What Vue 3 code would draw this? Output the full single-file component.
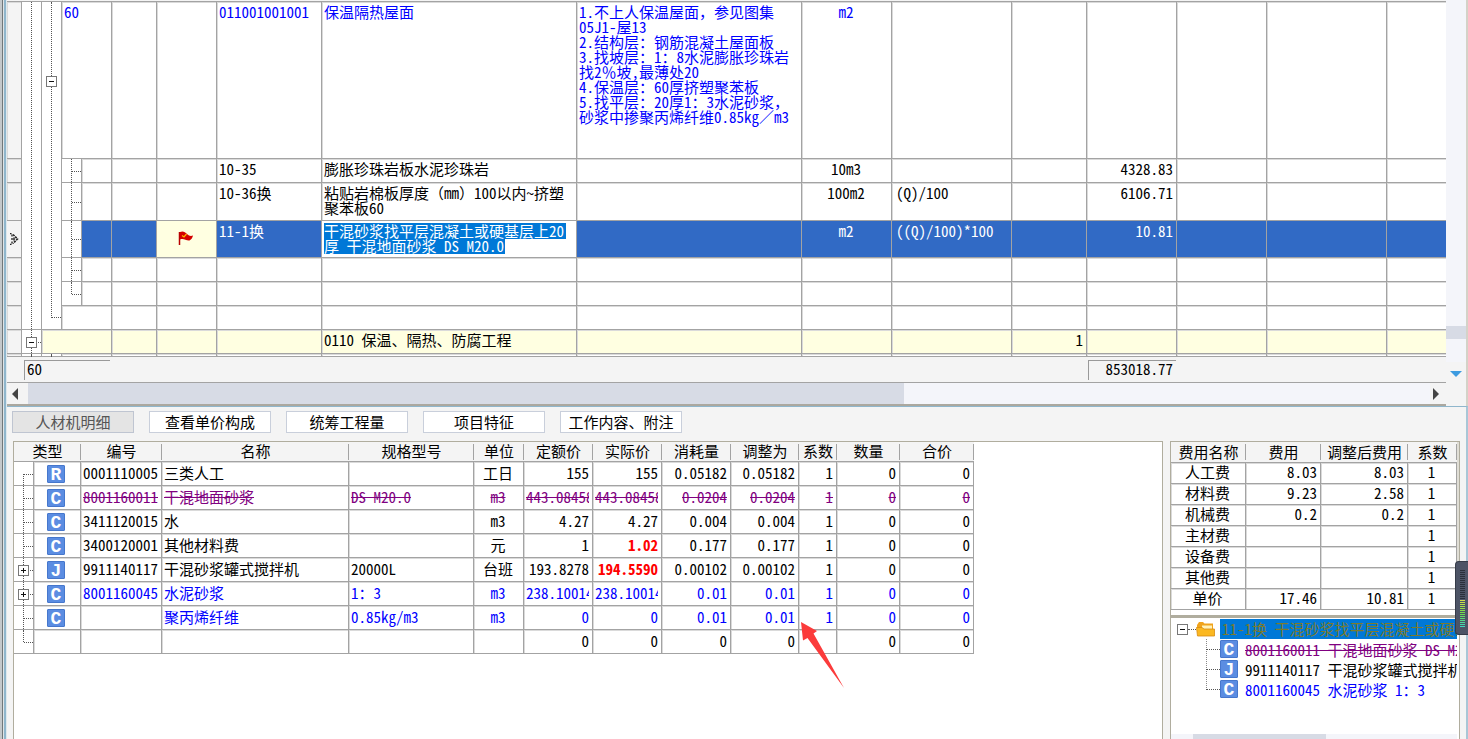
<script setup>
import { ref } from 'vue'

const editing = ref('干混砂浆找平层混凝土或硬基层上20厚 干混地面砂浆 DS M20.0')

const feature = [
  '1.不上人保温屋面，参见图集',
  '05J1-屋13',
  '2.结构层：钢筋混凝土屋面板',
  '3.找坡层：1：8水泥膨胀珍珠岩',
  '找2％坡,最薄处20',
  '4.保温层：60厚挤塑聚苯板',
  '5.找平层：20厚1：3水泥砂浆，',
  '砂浆中掺聚丙烯纤维0.85kg／m3',
].join('\n')

const gridWidths = [15, 20, 20, 20, 30, 45, 60, 105, 255, 225, 90, 120, 75, 90, 90, 120]

const items = [
  { kind: 'head', no: '60', code: '011001001001', name: '保温隔热屋面', feature, unit: 'm2' },
  { kind: 'child', code: '10-35', name: '膨胀珍珠岩板水泥珍珠岩', unit: '10m3', price: '4328.83' },
  { kind: 'child', tall: true, code: '10-36换', name: '粘贴岩棉板厚度（mm）100以内~挤塑\n聚苯板60', unit: '100m2', expr: '(Q)/100', price: '6106.71' },
  { kind: 'child', tall: true, selected: true, code: '11-1换', unit: 'm2', expr: '((Q)/100)*100', price: '10.81' },
  { kind: 'child' },
  { kind: 'child', last: true },
  { kind: 'tail' },
  { kind: 'section', name: '0110 保温、隔热、防腐工程', qty: '1' },
  { kind: 'sliver' },
]

const tabs = ['人材机明细', '查看单价构成', '统筹工程量', '项目特征', '工作内容、附注']

const detailWidths = [20, 47, 81, 187, 125, 50, 69, 69, 69, 68, 38, 63, 74]
const detailHeads = ['编号', '名称', '规格型号', '单位', '定额价', '实际价', '消耗量', '调整为', '系数', '数量', '合价']
const details = [
  { type: 'R', v: ['0001110005', '三类人工', '', '工日', '155', '155', '0.05182', '0.05182', '1', '0', '0'] },
  { type: 'C', tone: 'removed', v: ['8001160011', '干混地面砂浆', 'DS M20.0', 'm3', '443.08458', '443.08458', '0.0204', '0.0204', '1', '0', '0'] },
  { type: 'C', v: ['3411120015', '水', '', 'm3', '4.27', '4.27', '0.004', '0.004', '1', '0', '0'] },
  { type: 'C', hot: true, v: ['3400120001', '其他材料费', '', '元', '1', '1.02', '0.177', '0.177', '1', '0', '0'] },
  { type: 'J', hot: true, open: true, v: ['9911140117', '干混砂浆罐式搅拌机', '20000L', '台班', '193.8278', '194.5590', '0.00102', '0.00102', '1', '0', '0'] },
  { type: 'C', tone: 'added', open: true, v: ['8001160045', '水泥砂浆', '1：3', 'm3', '238.10014', '238.10014', '0.01', '0.01', '1', '0', '0'] },
  { type: 'C', tone: 'added', v: ['', '聚丙烯纤维', '0.85kg/m3', 'm3', '0', '0', '0.01', '0.01', '1', '0', '0'] },
  { type: '', v: ['', '', '', '', '0', '0', '0', '0', '', '0', '0'] },
]
const align = (i) => (i < 3 ? 'l' : i === 3 ? 'c' : 'r')

const fees = [
  ['人工费', '8.03', '8.03', '1'],
  ['材料费', '9.23', '2.58', '1'],
  ['机械费', '0.2', '0.2', '1'],
  ['主材费', '', '', '1'],
  ['设备费', '', '', '1'],
  ['其他费', '', '', '1'],
  ['单价', '17.46', '10.81', '1'],
]

const nodes = [
  { type: 'C', tone: 'removed', text: '8001160011 干混地面砂浆 DS M20.0' },
  { type: 'J', text: '9911140117 干混砂浆罐式搅拌机' },
  { type: 'C', tone: 'added', text: '8001160045 水泥砂浆 1：3' },
]
</script>

<template>
  <div class="app">
    <section class="upper">
      <div class="upper-main">
        <table class="grid">
          <colgroup>
            <col v-for="(w, i) in gridWidths" :key="i" :style="{ width: w + 'px' }" />
            <col />
          </colgroup>
          <tbody>
            <tr v-for="(r, i) in items" :key="i" :class="[r.kind, { tall: r.tall, selected: r.selected }]">
              <td class="gutter">
                <svg v-if="r.selected" class="cursor" width="9" height="12" viewBox="0 0 9 12">
                  <path d="M0 .7h1.500M0 11.300h1.500M2 1.500v2M2 8.500v2M2 5v2" fill="none" stroke="#222" stroke-width="1.300" />
                  <path d="M3 1.500L7.500 6 3 10.500" fill="none" stroke="#222" stroke-width="1.600" stroke-dasharray="2.200 0.800" />
                  <path d="M4 4.500v3" stroke="#222" stroke-width="1.500" />
                </svg>
              </td>
              <td v-if="r.kind === 'head'" class="tree" rowspan="7"><i class="v"></i></td>
              <td v-if="r.kind === 'section'" class="tree">
                <i class="v"></i><i class="h"></i><button class="box minus" aria-label="折叠"></button>
              </td>
              <td v-if="r.kind === 'sliver'" class="tree"><i class="v"></i></td>
              <td v-if="r.kind === 'head'" class="tree long" rowspan="7">
                <i class="v"></i><i class="h"></i><button class="box minus" aria-label="折叠"></button>
              </td>
              <td v-if="r.kind === 'sliver'" class="tree"><i class="v"></i></td>
              <td v-if="r.kind === 'child'" class="tree" :class="{ last: r.last }"><i class="v"></i><i class="h"></i></td>
              <td v-if="r.kind === 'section'" colspan="3"></td>
              <td v-else-if="r.kind === 'child'"></td>
              <td v-else colspan="2">{{ r.no }}</td>
              <td></td>
              <td class="flag-cell">
                <svg v-if="r.selected" class="flag" width="16" height="15" viewBox="0 0 16 15">
                  <path d="M1.500 1v13" stroke="#b80000" stroke-width="1.500" />
                  <path d="M2 1c3-1.500 5 0 7 2s4 2.500 6 1.500c-.5 2-1.500 4-3.500 5C8 10 6 7 2 8.500z" fill="#d40000" />
                  <path d="M4 4.500l2 1.500 2.500-3" fill="none" stroke="#ffb400" stroke-width="1.200" />
                </svg>
              </td>
              <td>{{ r.code }}</td>
              <td v-if="r.selected" class="edit-cell">
                <textarea v-model="editing" aria-label="名称" spellcheck="false"></textarea>
              </td>
              <td v-else>{{ r.name }}</td>
              <td>{{ r.feature }}</td>
              <td class="c">{{ r.unit }}</td>
              <td class="expr">{{ r.expr }}</td>
              <td class="r">{{ r.qty }}</td>
              <td class="r">{{ r.price }}</td>
              <td></td>
              <td></td>
              <td></td>
            </tr>
          </tbody>
        </table>
        <div class="totals">
          <output class="sunk first">60</output>
          <output class="sunk sum">853018.77</output>
        </div>
        <div class="hscroll">
          <svg width="21" height="20" viewBox="0 0 21 20"><path d="M11 4v12L5 10z" fill="#444" /></svg>
          <div class="htrack"><div class="hthumb"></div></div>
          <svg width="16" height="20" viewBox="0 0 16 20"><path d="M3 4v12l6-6z" fill="#444" /></svg>
        </div>
      </div>
      <div class="vscroll">
        <div class="vthumb"></div>
        <svg width="20" height="24" viewBox="0 0 20 24"><path d="M4 9h12l-6 6z" fill="#3d9be0" /></svg>
      </div>
    </section>

    <section class="lower">
      <nav class="tabs">
        <button v-for="(t, i) in tabs" :key="t" :class="{ active: i === 0 }">{{ t }}</button>
      </nav>
      <div class="panels">
        <div class="panel detail-panel">
          <table class="detail">
            <colgroup><col v-for="(w, i) in detailWidths" :key="i" :style="{ width: w + 'px' }" /></colgroup>
            <thead>
              <tr>
                <th colspan="2">类型</th>
                <th v-for="h in detailHeads" :key="h">{{ h }}</th>
              </tr>
            </thead>
            <tbody>
              <tr v-for="(d, i) in details" :key="i" :class="d.tone">
                <td class="tree" :class="{ first: i === 0, last: i === 7 }">
                  <i class="v"></i><i class="h"></i>
                  <button v-if="d.open" class="box plus" aria-label="展开"></button>
                </td>
                <td class="badge-cell"><span v-if="d.type" class="badge">{{ d.type }}</span></td>
                <td v-for="(v, k) in d.v" :key="k" class="value" :class="[align(k), { hot: d.hot && k === 5 }]"><div>{{ v }}</div></td>
              </tr>
            </tbody>
          </table>
          <svg class="arrow" width="44" height="68" viewBox="0 0 44 68">
            <path d="M0 0L16 9l-3.500 2.500L43 66 6.500 16 2 18.500z" fill="#fb3b3b" />
          </svg>
        </div>

        <aside class="side">
          <div class="panel fee-panel">
            <table class="fees">
              <thead>
                <tr><th class="f1">费用名称</th><th class="f2">费用</th><th class="f3">调整后费用</th><th>系数</th></tr>
              </thead>
              <tbody>
                <tr v-for="f in fees" :key="f[0]">
                  <td class="c">{{ f[0] }}</td><td class="r">{{ f[1] }}</td><td class="r">{{ f[2] }}</td><td class="c">{{ f[3] }}</td>
                </tr>
              </tbody>
            </table>
          </div>
          <div class="panel node-panel">
            <div class="root">
              <button class="box minus" aria-label="折叠"></button>
              <i class="dots"></i>
              <svg width="19" height="16" viewBox="0 0 19 16">
                <path d="M1 4L3 1h4l1.500 1.500H17V8H1z" fill="#f0a31c" />
                <path d="M6 4.500h10V9H6z" fill="#fff2b8" />
                <path d="M.5 6.500h5.500L8 8h10.500v7H1.500z" fill="#fbb821" stroke="#d88c10" stroke-width=".8" />
              </svg>
              <span class="root-text">11-1换 干混砂浆找平层混凝土或硬基层</span>
            </div>
            <ul class="nodes">
              <li v-for="n in nodes" :key="n.text" :class="n.tone">
                <i class="dots"></i><span class="badge">{{ n.type }}</span><span class="node-text">{{ n.text }}</span>
              </li>
            </ul>
            <div class="node-scroll"><div></div></div>
          </div>
        </aside>
      </div>
    </section>

    <div class="meter">
      <div class="meter-off"></div>
      <div class="meter-on"></div>
    </div>
  </div>
</template>

<style>
body {
  background: #f4f4f4;
}
</style>

<style scoped>
* {
  box-sizing: border-box;
}
.app {
  position: relative;
  height: 100vh;
  display: flex;
  flex-direction: column;
  overflow: hidden;
  padding-left: 7px;
  background: linear-gradient(90deg, #c3c8cb 2px, #70777a 2px 3px, #e0e4e6 3px 4px, #8fb6cc 4px 6px, #dde8ee 6px 7px, #f4f4f4 7px);
  font: 15px/15px 'Noto Sans Mono CJK SC', 'Liberation Mono', 'Noto Sans CJK SC', monospace;
  color: #000;
}
button {
  font: inherit;
  color: inherit;
  padding: 0;
}
table {
  border-collapse: separate;
  border-spacing: 0;
  table-layout: fixed;
}
td {
  position: relative;
  padding: 2px 3px 0 2px;
  vertical-align: top;
  white-space: pre;
  background: #fff;
  border-right: 1px solid #a3a3a3;
  border-bottom: 1px solid #a3a3a3;
  box-shadow: inset 1px 1px 0 #dadada;
}
.c {
  text-align: center;
}
.r {
  text-align: right;
}

/* item grid */
.upper {
  display: flex;
  flex: none;
  border-right: 2px solid #d4d2c8;
}
.upper-main {
  flex: 1;
  min-width: 0;
  padding-top: 1px;
}
.grid {
  width: 100%;
  border-top: 1px solid #a3a3a3;
}
.grid td:last-child {
  border-right: 0;
}
.grid tr {
  height: 24px;
}
.grid .head {
  height: 157px;
  color: #00f;
}
.grid .tall {
  height: 38px;
}
.grid .selected {
  height: 37px;
}
.grid .sliver {
  height: 3px;
}
.sliver td {
  padding: 0;
}
.grid .gutter {
  background: #f4f4f4;
  padding: 0;
}
.section td {
  background: #ffffe1;
}
.selected td {
  background: #316ac5;
  color: #fff;
  box-shadow: none;
}
.selected .flag-cell {
  background: #ffffe1;
  text-align: center;
}
.flag {
  margin-top: 8px;
}
.selected .gutter {
  line-height: 0;
}
.cursor {
  margin: 12px 3px 0;
}
.grid td.expr {
  padding-left: 4px;
}
.grid .edit-cell {
  padding: 0;
}
textarea {
  display: block;
  width: 100%;
  height: 36px;
  padding: 1px 1px;
  border: 1px solid #fff;
  outline: 0;
  resize: none;
  overflow: hidden;
  background:
    linear-gradient(#0078d7, #0078d7) 1px 1px / 242px 16px no-repeat,
    linear-gradient(#0078d7, #0078d7) 1px 16px / 181px 16px no-repeat,
    #fff;
  color: #fff;
  font: inherit;
}

/* tree lines */
.grid .tree,
.detail .tree {
  padding: 0;
  background: #fff;
  box-shadow: none;
}
.tree .v {
  position: absolute;
  left: 9px;
  top: 0;
  bottom: 0;
  border-left: 1px dotted #555;
}
.tree .h {
  position: absolute;
  left: 10px;
  right: 0;
  top: 50%;
  border-top: 1px dotted #555;
}
.tree.last .v {
  bottom: 50%;
}
.tree.first .v {
  top: 50%;
}
.tree.long .v,
.tree.long .h {
  bottom: 11px;
}
.tree.long .h {
  top: auto;
}
.box {
  width: 11px;
  height: 11px;
  border: 1px solid #777;
  background: linear-gradient(#111, #111) center / 5px 1px no-repeat, #fff;
}
.box.plus {
  background: linear-gradient(#111, #111) center / 5px 1px no-repeat, linear-gradient(#111, #111) center / 1px 5px no-repeat, #fff;
}
.tree .box {
  position: absolute;
  left: 4px;
  top: calc(50% - 5px);
}
.tree.long .box {
  top: 74px;
}

.totals {
  display: flex;
  justify-content: space-between;
  height: 26px;
  padding: 3px 270px 3px 17px;
  background: #f4f4f4;
  border-bottom: 1px solid #a3a3a3;
}
.sunk {
  height: 20px;
  padding: 0 3px 0 2px;
  border-top: 1px solid #999;
  border-left: 1px solid #999;
}
.first {
  width: 86px;
}
.sum {
  width: 88px;
  text-align: right;
}
.hscroll {
  display: flex;
  height: 23px;
  align-items: center;
  background: #f4f4f4;
  border-bottom: 2px solid #aba89f;
}
.htrack {
  flex: 1;
  height: 21px;
  background: #f4f5fa;
}
.hthumb {
  width: 62.5%;
  height: 21px;
  background: #d7dbe5;
}
.vscroll {
  width: 20px;
  display: flex;
  flex-direction: column;
  background: linear-gradient(#f4f5fa 362px, #f4f4f4 362px);
}
.vthumb {
  margin-top: 326px;
  margin-bottom: 12px;
  height: 13px;
  background: #d7dbe5;
}
.vscroll svg {
  margin-top: 11px;
}

/* detail area */
.lower {
  flex: 1;
  min-height: 0;
  display: flex;
  flex-direction: column;
  border-top: 1px solid #8fb6cc;
  border-right: 2px solid #a9c6d6;
  padding: 4px 6px 0 5px;
}
.tabs {
  display: flex;
  gap: 15px;
}
.tabs button {
  width: 122px;
  height: 22px;
  line-height: 18px;
  background: #fff;
  border: 1px solid #c9cfdb;
}
.tabs .active {
  background: #e4e4e4;
  color: #555;
  border-color: #bfc5d1;
}
.panels {
  flex: 1;
  min-height: 0;
  display: flex;
  gap: 7px;
  margin-top: 8px;
}
.panel {
  background: #fff;
  border: 1px solid #b0ad9e;
}
.detail-panel {
  position: relative;
  flex: 1;
  border-bottom: 0;
  margin-left: 1px;
}
.side {
  width: 290px;
  display: flex;
  flex-direction: column;
}
th {
  height: 21px;
  padding: 0 0 2px;
  font-weight: 400;
  border-bottom: 1px solid #a3a3a3;
  background: linear-gradient(#a3a3a3, #a3a3a3) right 2px / 1px 16px no-repeat, #f4f4f4;
}
.detail {
  width: 960px;
}
.detail th {
  height: 20px;
}
.detail tbody tr {
  height: 24px;
}
.detail .value {
  padding-top: 0;
}
.value div {
  overflow: hidden;
  height: 23px;
  line-height: 22px;
}
.detail .badge-cell {
  padding: 3px 13px 0;
}
.removed {
  color: #800080;
}
.removed .value,
.removed .node-text {
  text-decoration: line-through;
}
.added {
  color: #00f;
}
.hot {
  color: #f00;
  font-weight: 700;
}
.badge {
  display: block;
  width: 18px;
  height: 18px;
  border: 1px solid #4677cc;
  border-radius: 1px;
  background: #5b8de2;
  color: #fff;
  font: bold 18px/18px 'Liberation Mono', monospace;
  text-align: center;
}
.arrow {
  position: absolute;
  left: 787px;
  top: 180px;
}

.fee-panel {
  padding-bottom: 5px;
}
.fees {
  width: 100%;
  border-right: 2px solid #e0ded6;
}
.fees tbody tr {
  height: 21px;
}
.fees td {
  padding-top: 1px;
}
.f1,
.f2 {
  width: 75px;
}
.f3 {
  width: 87px;
}
.node-panel {
  flex: 1;
  display: flex;
  flex-direction: column;
  border-top-width: 2px;
  border-bottom: 0;
  padding: 1px 2px 0 0;
  overflow: hidden;
}
.root {
  display: flex;
  align-items: center;
  height: 20px;
  padding-left: 6px;
}
.root svg,
.root .box {
  flex: none;
}
.dots {
  flex: none;
  width: 8px;
  border-top: 1px dotted #555;
}
.root-text {
  flex: 1;
  margin-left: 5px;
  padding-left: 2px;
  line-height: 20px;
  white-space: pre;
  overflow: hidden;
  background: #0078d7;
  color: #7b7b2e;
}
.nodes {
  flex: 1;
  list-style: none;
  margin: 0;
  padding: 0 0 0 35px;
}
.nodes li {
  display: flex;
  align-items: center;
  height: 20px;
  overflow: hidden;
  background: repeating-linear-gradient(#888 0 1px, #fff 1px 2px) left top / 1px 100% no-repeat;
}
.nodes li:last-child {
  background-size: 1px 50%;
}
.nodes .dots {
  width: 14px;
}
.nodes .badge {
  flex: none;
}
.node-text {
  margin-left: 7px;
  white-space: pre;
}
.node-scroll {
  height: 5px;
  padding-left: 22px;
  background: #f4f5fa;
}
.node-scroll div {
  width: 133px;
  height: 5px;
  background: #d7dbe5;
}

/* floating level meter */
.meter {
  position: absolute;
  right: 0;
  top: 561px;
  width: 13px;
  height: 74px;
  padding: 8px 3px 0 4px;
  border-radius: 4px 0 0 4px;
  border: 1px solid #353b48;
  border-right: 0;
  background: #4d5466;
}
.meter-off {
  height: 30px;
  background: repeating-linear-gradient(#2a2f3a 0 1px, #4d5466 1px 2px);
}
.meter-on {
  height: 27px;
  background: repeating-linear-gradient(transparent 0 1px, #4d5466 1px 2px), linear-gradient(#d8e04a, #6fdc4a 50%, #3fd6c0);
}
</style>
